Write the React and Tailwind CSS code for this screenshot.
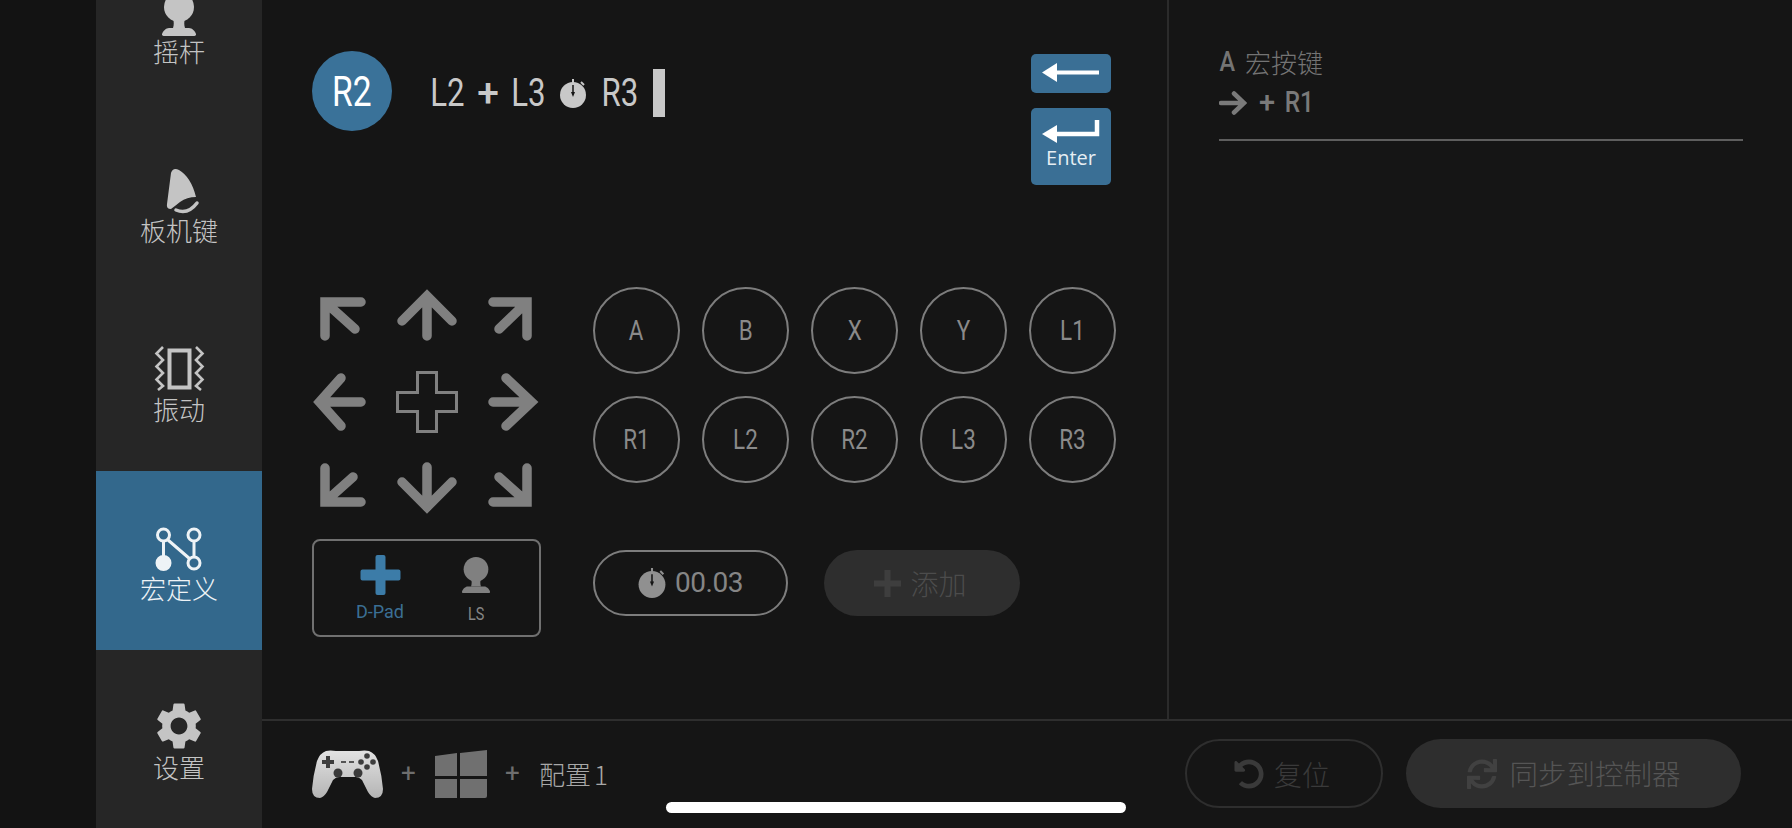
import React from "react";
import { MdSettings } from "react-icons/md";
import { FaUndoAlt, FaSync } from "react-icons/fa";

const Din = ({ children, thin }) => (
  <span className={"inline-block whitespace-nowrap font-['Roboto',sans-serif] " + (thin ? "scale-x-[.8] font-normal" : "scale-x-[.84] font-medium")}>{children}</span>
);

const Joystick = ({ className = "" }) => (
  <svg viewBox="0 0 34 44" fill="currentColor" className={className}>
    <circle cx="17" cy="15" r="15" />
    <path d="M11 26h12c-1 4-1 7 0 10H11c1-3 1-6 0-10z" />
    <path d="M7 36h20c3 0 6 3 7 6 .3 1-.5 2-1.500 2H1.500C.5 44-.3 43 0 42c1-3 4-6 7-6z" />
  </svg>
);

const Timer = ({ className = "", hand = "#151515" }) => (
  <svg viewBox="0 0 26 29" className={className}>
    <path d="M13 0v4" stroke="currentColor" strokeWidth="2" />
    <path d="M21 3l3 3" stroke="currentColor" strokeWidth="2" />
    <circle cx="13" cy="16" r="13" fill="currentColor" />
    <path d="M13 6v9" stroke={hand} strokeWidth="1.500" />
    <path d="M11 13h4l-2 5z" fill={hand} />
  </svg>
);

const NavItem = ({ icon, label, active }) => (
  <div className={"h-[179px] flex flex-col items-center shrink-0 " + (active ? "bg-[#33688c] text-[#eef3f6]" : "text-[#c4c4c4]")}>
    <div className="h-[102px] flex items-end justify-center">{icon}</div>
    <div className="h-[30px] leading-[30px] text-[26px] font-light whitespace-nowrap">{label}</div>
  </div>
);

const Sidebar = () => (
  <div className="w-[166px] shrink-0 bg-[#262626] -mt-[66px] h-[895px] flex flex-col">
    <NavItem label="摇杆" icon={<Joystick className="w-[34px] h-[44px]" />} />
    <NavItem
      label="板机键"
      icon={
        <svg viewBox="161 166 36 48" className="w-[36px] h-[48px] mb-px overflow-visible">
          <path fill="currentColor" d="M171 173Q173 167 179 170Q191 177 196 197Q187 197 180 202Q175 206 171 209Q166 209 167 204Z" />
          <path fill="none" stroke="currentColor" strokeWidth="3.500" strokeLinecap="round" d="M176 210Q188 215 197 203" />
        </svg>
      }
    />
    <NavItem
      label="振动"
      icon={
        <svg viewBox="152 345 52 47" fill="none" stroke="currentColor" className="w-[52px] h-[47px] mb-[2px]">
          <rect x="168.500" y="350.500" width="20" height="37" strokeWidth="4" />
          <path strokeWidth="2.600" d="M162 347L155.500 353.500L162 360L155.500 366.500L162 373L155.500 379.500L162 386L157 390" />
          <path strokeWidth="2.600" d="M195 347L201.500 353.500L195 360L201.500 366.500L195 373L201.500 379.500L195 386L200 390" />
        </svg>
      }
    />
    <NavItem
      active
      label="宏定义"
      icon={
        <svg viewBox="154 526 50 46" fill="none" stroke="currentColor" strokeWidth="3" className="w-[50px] h-[46px] mb-px">
          <circle cx="163.500" cy="535" r="6" />
          <circle cx="194" cy="535" r="6" />
          <circle cx="194" cy="563" r="6" />
          <circle cx="163.500" cy="563" r="6.500" fill="currentColor" />
          <path d="M163.500 541V557M168 540L190 559M194 541V557" />
        </svg>
      }
    />
    <NavItem label="设置" icon={<MdSettings className="w-[56px] h-[56px] -mb-[2px]" />} />
  </div>
);

const A = ({ d }) => (
  <svg viewBox="0 0 60 60" fill="none" stroke="currentColor" strokeWidth="9.500" strokeLinecap="round" strokeLinejoin="miter" strokeMiterlimit="4" className="w-[60px] h-[60px] overflow-visible">
    <path d={d} />
  </svg>
);

const arrows = [
  "M48 15H12V49M12 15L42 42",
  "M5 34L30 9L55 34M30 9V49",
  "M12 15H46V49M46 15L18 42",
  "M28 6L6.500 30L28 54M6.500 30H48",
  null,
  "M25 6L50.500 30L25 54M50.500 30H12",
  "M48 45H12V11M12 45L40 20",
  "M5 25L30 50L55 25M30 50V10",
  "M12 45H46V11M46 45L18 20",
];

const Arrows = () => (
  <div className="grid grid-cols-[repeat(3,60px)] auto-rows-[60px] gap-x-[24px] gap-y-[25px] justify-center text-[#808080]">
    {arrows.map((d, i) =>
      d ? (
        <A key={i} d={d} />
      ) : (
        <svg key={i} viewBox="0 0 60 60" fill="none" stroke="currentColor" strokeWidth="3" className="w-[60px] h-[60px] overflow-visible">
          <path d="M20.500.5H39.500V20.500H59.500V39.500H39.500V59.500H20.500V39.500H.5V20.500H20.500Z" />
        </svg>
      )
    )}
  </div>
);

const Round = ({ label }) => (
  <div className="w-[87px] h-[87px] rounded-full border-2 border-[#7d7d7d] flex items-center justify-center text-[28px] text-[#8a8a8a]">
    <Din thin>{label}</Din>
  </div>
);

const Token = ({ w, children }) => (
  <span className={"flex justify-center " + w}>{children}</span>
);

const TopRow = () => (
  <div className="flex items-start justify-between pt-[51px] pr-[56px]">
    <div className="flex items-center">
      <div className="w-[80px] h-[80px] rounded-full bg-[#3a7299] flex items-center justify-center text-[42px] text-white">
        <Din thin>R2</Din>
      </div>
      <div className="flex items-center gap-[15px] ml-[38px] pt-[4px] text-[39px] leading-[48px] text-[#c8c8c8]">
        <Token w="w-[34px]"><Din thin>L2</Din></Token>
        <Token w="w-[18px]"><span className="font-medium font-['Roboto',sans-serif]">+</span></Token>
        <Token w="w-[33px]"><Din thin>L3</Din></Token>
        <Timer className="w-[26px] h-[29px] text-[#c8c8c8] mt-[1px]" />
        <Token w="w-[37px]"><Din thin>R3</Din></Token>
        <span className="w-[12px] h-[48px] bg-[#c8c8c8]" />
      </div>
    </div>
    <div className="mt-[3px] flex flex-col gap-[15px] w-[80px]">
      <div className="h-[39px] rounded-[5px] bg-[#3a6f95]">
        <svg viewBox="0 0 80 39" className="w-[80px] h-[39px]">
          <path fill="#fff" d="M11 18.500L26 9V28Z" />
          <path stroke="#fff" strokeWidth="4" d="M25 18.500H68" />
        </svg>
      </div>
      <div className="h-[77px] rounded-[5px] bg-[#3a6f95] flex flex-col items-center">
        <svg viewBox="0 0 80 38" className="w-[80px] h-[38px] shrink-0">
          <path fill="#fff" d="M11 26L26 17V35Z" />
          <path fill="none" stroke="#fff" strokeWidth="4.500" d="M25 26H66V12" />
        </svg>
        <div className="h-[24px] leading-[24px] text-[20px] text-[#e6eef3] font-['Open_Sans',sans-serif]">Enter</div>
      </div>
    </div>
  </div>
);

const Box = () => (
  <div className="mt-[22px] h-[98px] rounded-[8px] border-2 border-[#707070] flex pl-[36px] gap-[36px] pt-[14px]">
    <div className="w-[60px] flex flex-col items-center">
      <svg viewBox="0 0 40 40" className="w-[41px] h-[40px] text-[#3c7ca8]" fill="currentColor">
        <path d="M15 2a2 2 0 0 1 2-2h6a2 2 0 0 1 2 2v12.500h13a2 2 0 0 1 2 2v7a2 2 0 0 1-2 2H25V38a2 2 0 0 1-2 2h-6a2 2 0 0 1-2-2V25.500H2a2 2 0 0 1-2-2v-7a2 2 0 0 1 2-2h13z" />
      </svg>
      <div className="mt-[7px] h-[20px] leading-[20px] text-[18px] text-[#3b6f94] font-['Roboto',sans-serif] whitespace-nowrap">D-Pad</div>
    </div>
    <div className="w-[60px] flex flex-col items-center">
      <Joystick className="w-[28px] h-[40px] text-[#808080]" />
      <div className="mt-[7px] h-[20px] leading-[20px] text-[18px] text-[#858585]"><Din thin>LS</Din></div>
    </div>
  </div>
);

const Controls = () => (
  <div className="flex mt-[102px] gap-[52px]">
    <div className="w-[229px]">
      <Arrows />
      <Box />
    </div>
    <div>
      <div className="grid grid-cols-[repeat(5,87px)] gap-x-[22px] gap-y-[22px]">
        {["A", "B", "X", "Y", "L1", "R1", "L2", "R2", "L3", "R3"].map((l) => (
          <Round key={l} label={l} />
        ))}
      </div>
      <div className="mt-[67px] flex gap-[36px]">
        <div className="w-[195px] h-[66px] rounded-full border-2 border-[#7d7d7d] flex items-center justify-center gap-[9px]">
          <Timer className="w-[28px] h-[30px] text-[#909090]" />
          <span className="text-[28px] text-[#858585] font-['Roboto',sans-serif] tracking-[-0.5px]">00.03</span>
        </div>
        <div className="w-[196px] h-[66px] rounded-full bg-[#2e2e2e] flex items-center justify-center gap-[9px] pr-[3px]">
          <svg viewBox="0 0 27 27" className="w-[27px] h-[27px] text-[#3e3e3e]" fill="currentColor">
            <path d="M10.500 0h6v10.500H27v6H16.500V27h-6V16.500H0v-6h10.500z" />
          </svg>
          <span className="text-[28px] font-light text-[#4c4c4c]">添加</span>
        </div>
      </div>
    </div>
  </div>
);

const RightPanel = () => (
  <div className="flex-1 pl-[50px] pr-[49px] pt-[44px] text-[#747474]">
    <div className="h-[36px] flex items-center gap-[9px]">
      <span className="w-[17px] flex justify-center text-[28px]"><Din>A</Din></span>
      <span className="text-[26px] font-light leading-[36px]">宏按键</span>
    </div>
    <div className="mt-[5px] h-[36px] flex items-center text-[29px] text-[#7a7a7a]">
      <svg viewBox="0 0 28 24" fill="none" stroke="currentColor" strokeWidth="4.500" strokeLinecap="round" className="w-[28px] h-[24px]">
        <path d="M2 12H25M15 2.500L25 12L15 21.500" />
      </svg>
      <span className="ml-[10px] w-[20px] flex justify-center font-medium font-['Roboto',sans-serif]">+</span>
      <span className="ml-[9px] w-[27px] flex justify-center"><Din>R1</Din></span>
    </div>
    <div className="mt-[18px] h-[2px] bg-[#5e5e5e]" />
  </div>
);

const Controller = () => (
  <svg viewBox="0 0 71 48" className="w-[71px] h-[48px]">
    <defs>
      <linearGradient id="pad" x1="0" y1="0" x2="0" y2="1">
        <stop offset="0" stopColor="#e2e2e2" />
        <stop offset="1" stopColor="#b4b4b4" />
      </linearGradient>
    </defs>
    <path fill="url(#pad)" d="M14 1Q18 0 24 1H47Q53 0 57 1Q63 3 66 11Q70 26 71 39Q71 48 63 48Q59 47 56 42L50 30Q47 27 44 27H27Q24 27 21 30L15 42Q12 47 8 48Q0 48 0 39Q1 26 5 11Q8 3 14 1Z" />
    <path fill="#3d3d3d" d="M14 6h4v4h4v4h-4v4h-4v-4h-4v-4h4z" />
    <path stroke="#555" strokeWidth="1.800" d="M29 12h5M37 12h5" />
    <circle cx="55" cy="6" r="2.800" fill="#3d3d3d" />
    <circle cx="49" cy="12" r="2.800" fill="#3d3d3d" />
    <circle cx="61" cy="12" r="2.800" fill="#3d3d3d" />
    <circle cx="55" cy="17" r="2.800" fill="#3d3d3d" />
    <circle cx="26" cy="23" r="4.500" fill="#3a3a3a" />
    <circle cx="46" cy="23" r="4.500" fill="#3a3a3a" />
  </svg>
);

const BottomBar = () => (
  <div className="flex-1 flex items-center pl-[50px] pr-[51px] pb-[2px]">
    <Controller />
    <span className="ml-[17px] w-[17px] flex justify-center text-[26px] text-[#6e6e6e] font-['Roboto',sans-serif]">+</span>
    <svg viewBox="0 0 52 48" className="ml-[18px] w-[52px] h-[48px]" fill="#707070">
      <path d="M0 6L22 3V26H0ZM25 3L52 0V26H25ZM0 29H22V48H0ZM25 29H52V46Q52 48 50 48H25Z" />
    </svg>
    <span className="ml-[17px] w-[17px] flex justify-center text-[26px] text-[#6e6e6e] font-['Roboto',sans-serif]">+</span>
    <span className="ml-[18px] text-[26px] font-light text-[#a8a8a8] whitespace-nowrap">配置<span className="ml-[3px]">1</span></span>
    <div className="ml-auto w-[198px] h-[69px] rounded-full border-2 border-[#2e2e2e] flex items-center justify-center gap-[10px] pr-[4px]">
      <FaUndoAlt className="w-[30px] h-[30px] text-[#3a3a3a]" />
      <span className="text-[28px] font-light text-[#3a3a3a]">复位</span>
    </div>
    <div className="ml-[23px] w-[335px] h-[69px] rounded-full bg-[#2e2e2e] flex items-center justify-center gap-[11px]">
      <FaSync className="w-[32px] h-[30px] text-[#414141]" />
      <span className="text-[28.500px] font-light text-[#555555]">同步到控制器</span>
    </div>
  </div>
);

export default function App() {
  return (
    <div className="relative w-[1792px] h-[828px] overflow-hidden flex bg-[#131313] font-['Noto_Sans_CJK_SC',sans-serif]">
      <div className="w-[96px] shrink-0" />
      <Sidebar />
      <div className="flex-1 flex flex-col bg-[#151515]">
        <div className="h-[721px] shrink-0 flex border-b-2 border-[#2e2e2e]">
          <div className="w-[907px] shrink-0 pl-[50px] border-r-2 border-[#2b2b2b]">
            <TopRow />
            <Controls />
          </div>
          <RightPanel />
        </div>
        <BottomBar />
      </div>
      <div className="absolute left-[666px] top-[802px] w-[460px] h-[11px] rounded-full bg-white" />
    </div>
  );
}
